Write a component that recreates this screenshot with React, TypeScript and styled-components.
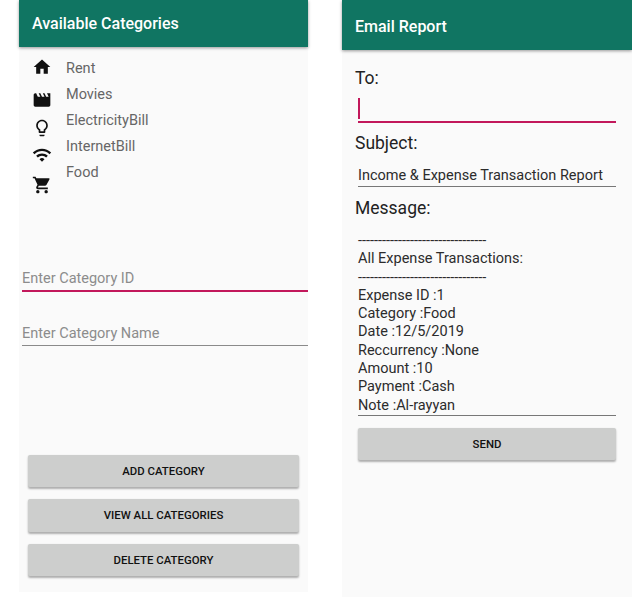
import React from 'react'
import styled, { createGlobalStyle } from 'styled-components'
import { MdHome, MdMovie, MdLightbulbOutline, MdWifi, MdShoppingCart } from 'react-icons/md'

const GlobalStyle = createGlobalStyle`
  html, body {
    margin: 0;
    padding: 0;
    background: #fff;
    font-family: Roboto, "Noto Sans", sans-serif;
    overflow: hidden;
  }
`

const Page = styled.div`
  display: flex;
  align-items: flex-start;
  width: 632px;
  height: 602px;
  padding-left: 19px;
  box-sizing: border-box;
`

const Phone = styled.div<{ $width: number; $height: number }>`
  display: flex;
  flex-direction: column;
  width: ${(p) => p.$width}px;
  height: ${(p) => p.$height}px;
  background: #fafafa;
`

const LeftPhone = styled(Phone)`
  margin-right: 34px;
`

const Header = styled.div<{ $height: number; $drop: number }>`
  display: flex;
  align-items: center;
  box-sizing: border-box;
  height: ${(p) => p.$height}px;
  padding: ${(p) => p.$drop}px 0 0 13px;
  flex-shrink: 0;
  background: #107562;
  color: #fff;
  font-size: 16px;
  font-weight: 500;
  box-shadow: 0 1px 3px rgba(0, 0, 0, 0.4);
`

const CategoryList = styled.div`
  display: flex;
  height: 151px;
  padding: 10px 0 0 13px;
`

const IconColumn = styled.div`
  display: flex;
  flex-direction: column;
  width: 34px;
  color: #111;
  svg {
    display: block;
    width: 20px;
    height: 20px;
  }
`

const IconSlot = styled.div<{ $height: number }>`
  height: ${(p) => p.$height}px;
`

const NameColumn = styled.div`
  display: flex;
  flex-direction: column;
`

const CategoryName = styled.div`
  height: 26px;
  line-height: 23px;
  font-size: 14.5px;
  color: #666;
`

const Fields = styled.div`
  display: flex;
  flex-direction: column;
  gap: 26.5px;
  margin-top: 56px;
  padding-left: 3px;
`

const Field = styled.div<{ $focused?: boolean }>`
  height: 26px;
  line-height: 30px;
  font-size: 14.5px;
  color: #8c8c8c;
  border-bottom: ${(p) => (p.$focused ? '2px solid #c2185b' : '1.5px solid #8a8a8a')};
`

const ButtonStack = styled.div`
  display: flex;
  flex-direction: column;
  gap: 12px;
  margin-top: 109px;
  padding: 0 9px;
`

const Button = styled.button`
  display: block;
  width: 100%;
  height: 32.5px;
  padding: 0;
  border: none;
  border-radius: 2px;
  background: #cdcecd;
  color: #111;
  font-family: inherit;
  font-size: 11.4px;
  font-weight: 500;
  box-shadow: 0 1.5px 2px rgba(0, 0, 0, 0.3);
`

const EmailBody = styled.div`
  display: flex;
  flex-direction: column;
  padding: 16px 16px 0 16px;
`

const Label = styled.div`
  margin-left: -3px;
  height: 24px;
  line-height: 24px;
  font-size: 17.5px;
  color: #222;
`

const ToInput = styled.div`
  height: 26px;
  margin: 5px 0 8px;
  border-bottom: 2px solid #c2185b;
`

const Caret = styled.div`
  width: 2px;
  height: 21px;
  margin-top: 3px;
  background: #c2185b;
`

const SubjectValue = styled.div`
  height: 22px;
  margin: 9px 0 9px;
  line-height: 23px;
  font-size: 14.5px;
  color: #2c2c2c;
  border-bottom: 1.5px solid #777;
`

const MessageValue = styled.div`
  margin-top: 12px;
  font-size: 14.5px;
  line-height: 18.3px;
  color: #2c2c2c;
  border-bottom: 1.5px solid #777;
`

const MessageLine = styled.div`
  white-space: pre;
`

const SendButton = styled(Button)`
  margin-top: 12px;
`

const categories = ['Rent', 'Movies', 'ElectricityBill', 'InternetBill', 'Food']

const icons = [
  { icon: <MdHome />, height: 33 },
  { icon: <MdMovie />, height: 28 },
  { icon: <MdLightbulbOutline />, height: 27 },
  { icon: <MdWifi />, height: 30 },
  { icon: <MdShoppingCart />, height: 24 },
]

const dashes = '--------------------------------'

const messageLines = [
  'Expense ID :1',
  'Category :Food',
  'Date :12/5/2019',
  'Reccurrency :None',
  'Amount :10',
  'Payment :Cash',
  'Note :Al-rayyan',
]

export default function App() {
  return (
    <Page>
      <GlobalStyle />
      <LeftPhone $width={289} $height={592}>
        <Header $height={47} $drop={0}>Available Categories</Header>
        <CategoryList>
          <IconColumn>
            {icons.map((item, i) => (
              <IconSlot key={i} $height={item.height}>
                {item.icon}
              </IconSlot>
            ))}
          </IconColumn>
          <NameColumn>
            {categories.map((name) => (
              <CategoryName key={name}>{name}</CategoryName>
            ))}
          </NameColumn>
        </CategoryList>
        <Fields>
          <Field $focused>Enter Category ID</Field>
          <Field>Enter Category Name</Field>
        </Fields>
        <ButtonStack>
          <Button>ADD CATEGORY</Button>
          <Button>VIEW ALL CATEGORIES</Button>
          <Button>DELETE CATEGORY</Button>
        </ButtonStack>
      </LeftPhone>

      <Phone $width={290} $height={597}>
        <Header $height={50} $drop={2}>Email Report</Header>
        <EmailBody>
          <Label>To:</Label>
          <ToInput>
            <Caret />
          </ToInput>
          <Label>Subject:</Label>
          <SubjectValue>Income &amp; Expense Transaction Report</SubjectValue>
          <Label>Message:</Label>
          <MessageValue>
            <MessageLine>{dashes}</MessageLine>
            <MessageLine>All Expense Transactions:</MessageLine>
            <MessageLine>{dashes}</MessageLine>
            {messageLines.map((line) => (
              <MessageLine key={line}>{line}</MessageLine>
            ))}
          </MessageValue>
          <SendButton>SEND</SendButton>
        </EmailBody>
      </Phone>
    </Page>
  )
}
